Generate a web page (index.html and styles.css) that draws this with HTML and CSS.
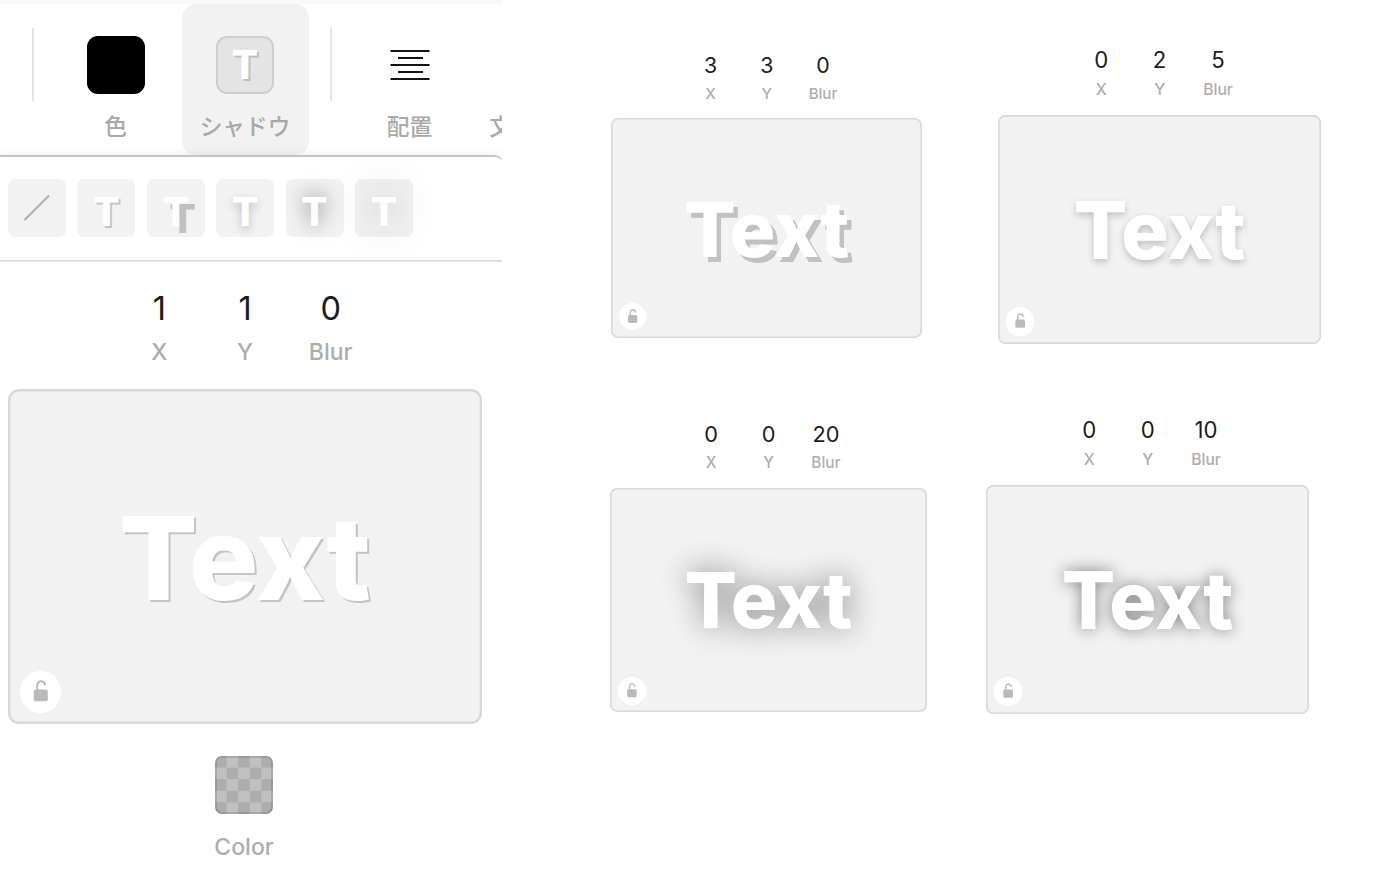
FILE: index.html
```html
<!DOCTYPE html>
<html lang="ja">
<head>
  <meta charset="UTF-8">
  <title>Text shadow</title>
  <link rel="stylesheet" href="styles.css">
</head>
<body>
  <svg class="hidden">
    <symbol id="unlock" viewBox="0 0 42 42">
      <rect x="13.9" y="18.6" width="14.2" height="12" rx="2" fill="#bababa"/>
      <path d="M17.4 19.5v-5.4a4 4 0 0 1 7.7-1.2v1" fill="none" stroke="#bababa" stroke-width="2.1" stroke-linecap="round"/>
    </symbol>
  </svg>
  <div class="page">
    <section class="editor">
      <nav class="toolbar">
        <div class="divider"></div>
        <div class="tool tool-color">
          <div class="tool-icon black"></div>
          <span class="tool-label">色</span>
        </div>
        <div class="tool active">
          <div class="tool-icon shadow-icon">T</div>
          <span class="tool-label">シャドウ</span>
        </div>
        <div class="divider divider-right"></div>
        <div class="tool tool-align">
          <svg class="align-icon" viewBox="0 0 58 58">
            <path d="M9.5 15H48.5M17 22H42M9.5 29H48.5M17 36H42M9.5 43H48.5" stroke="#111" stroke-width="2.1"/>
          </svg>
          <span class="tool-label">配置</span>
        </div>
        <div class="tool tool-next">
          <span class="tool-label">文</span>
        </div>
      </nav>
      <div class="presets">
        <div class="preset">
          <svg viewBox="0 0 58 58"><path d="M16.5 41L41 16.5" stroke="#aeaeae" stroke-width="2.2"/></svg>
        </div>
        <div class="preset"><span class="s1">T</span></div>
        <div class="preset"><span class="s2">T</span></div>
        <div class="preset"><span class="s3">T</span></div>
        <div class="preset"><span class="s4">T</span></div>
        <div class="preset"><span class="s5">T</span></div>
      </div>
      <div class="preview main">
        <div class="values">
          <div class="value"><b>1</b><i>X</i></div>
          <div class="value"><b>1</b><i>Y</i></div>
          <div class="value"><b>0</b><i>Blur</i></div>
        </div>
        <div class="card">
          <span class="sample">Text</span>
          <svg class="lock"><use href="#unlock"/></svg>
        </div>
      </div>
      <div class="color-picker">
        <div class="swatch"></div>
        <span class="color-label">Color</span>
      </div>
    </section>
    <section class="variants">
      <div class="preview hard">
        <div class="values">
          <div class="value"><b>3</b><i>X</i></div>
          <div class="value"><b>3</b><i>Y</i></div>
          <div class="value"><b>0</b><i>Blur</i></div>
        </div>
        <div class="card">
          <span class="sample">Text</span>
          <svg class="lock"><use href="#unlock"/></svg>
        </div>
      </div>
      <div class="preview soft">
        <div class="values">
          <div class="value"><b>0</b><i>X</i></div>
          <div class="value"><b>2</b><i>Y</i></div>
          <div class="value"><b>5</b><i>Blur</i></div>
        </div>
        <div class="card">
          <span class="sample">Text</span>
          <svg class="lock"><use href="#unlock"/></svg>
        </div>
      </div>
      <div class="preview wide">
        <div class="values">
          <div class="value"><b>0</b><i>X</i></div>
          <div class="value"><b>0</b><i>Y</i></div>
          <div class="value"><b>20</b><i>Blur</i></div>
        </div>
        <div class="card">
          <span class="sample">Text</span>
          <svg class="lock"><use href="#unlock"/></svg>
        </div>
      </div>
      <div class="preview glow">
        <div class="values">
          <div class="value"><b>0</b><i>X</i></div>
          <div class="value"><b>0</b><i>Y</i></div>
          <div class="value"><b>10</b><i>Blur</i></div>
        </div>
        <div class="card">
          <span class="sample">Text</span>
          <svg class="lock"><use href="#unlock"/></svg>
        </div>
      </div>
    </section>
  </div>
</body>
</html>
```

FILE: styles.css
```css
* { box-sizing: border-box; }
body {
  margin: 0;
  background: #fff;
  font-family: Inter, "Noto Sans CJK JP", sans-serif;
  overflow: hidden;
}
.hidden { display: none; }
.page {
  display: flex;
  width: 1382px;
  height: 870px;
}
.editor {
  width: 502px;
  height: 870px;
  overflow: hidden;
  flex-shrink: 0;
}

/* toolbar */
.toolbar {
  display: flex;
  height: 155px;
  border-top: 4px solid #f9f9f9;
  padding-left: 31.5px;
  background: #fff;
}
.divider {
  width: 2px;
  height: 73px;
  margin-top: 24px;
  background: #e4e4e4;
  flex-shrink: 0;
}
.divider-right { margin-left: 21px; }
.tool {
  display: flex;
  flex-direction: column;
  align-items: center;
  width: 127px;
  height: 150.5px;
  padding-top: 31.5px;
  flex-shrink: 0;
}
.tool-color {
  width: 132px;
  margin-left: 16px;
}
.tool-icon {
  width: 58px;
  height: 58px;
  border-radius: 11px;
}
.black { background: #000; }
.active {
  background: #f2f2f2;
  border-radius: 14px;
}
.shadow-icon {
  border: 2px solid #cecece;
  background: #e4e4e4;
  color: #fff;
  font-size: 39px;
  font-weight: 800;
  line-height: 54px;
  text-align: center;
  text-shadow: 2px 2px #bebebe;
}
.tool-align {
  width: 100px;
  margin-left: 28px;
}
.align-icon {
  width: 58px;
  height: 58px;
}
.tool-label {
  margin-top: 17px;
  color: #a9a9a9;
  font-size: 22.7px;
  font-weight: 500;
  line-height: 32px;
  white-space: nowrap;
}
.tool-next {
  width: 82px;
  padding-top: 89.5px;
}

/* presets */
.presets {
  position: relative;
  display: flex;
  gap: 11.4px;
  width: 504px;
  height: 106.5px;
  padding: 22px 8px 0;
  background: #fff;
  border-top: 2px solid #c3c3c3;
  border-bottom: 2px solid #d7d7d7;
  border-top-right-radius: 10px;
  box-shadow: 0 -1px 9px rgba(0,0,0,0.08);
  clip-path: inset(-12px 0 0 0);
}
.preset {
  width: 58px;
  height: 58px;
  border-radius: 7px;
  background: #f2f2f2;
  color: #fff;
  font-size: 39px;
  font-weight: 800;
  line-height: 66px;
  text-align: center;
  flex-shrink: 0;
}
.preset svg { display: block; }
.s1 { text-shadow: 2px 2px #c6c6c6; }
.s2 { text-shadow: 7px 7px #c1c1c1; }
.s3 { text-shadow: 0 4px 10px rgba(0,0,0,0.22); }
.s4 { text-shadow: 0 0 20px rgba(0,0,0,0.5); }
.s5 { text-shadow: 0 0 40px rgba(0,0,0,0.42); }

/* preview: every length is a multiple of --u */
.preview {
  --u: 1px;
  width: calc(474 * var(--u));
}
.values {
  display: flex;
  justify-content: center;
  height: calc(100 * var(--u));
}
.value {
  display: flex;
  flex-direction: column;
  align-items: center;
  width: calc(85.7 * var(--u));
}
.value b {
  color: #1c1c1c;
  font-size: calc(32.5 * var(--u));
  font-weight: 400;
  line-height: calc(40 * var(--u));
}
.value i {
  margin-top: calc(8 * var(--u));
  color: #adadad;
  font-size: calc(23 * var(--u));
  font-style: normal;
  font-weight: 450;
  line-height: calc(30 * var(--u));
}
.card {
  position: relative;
  display: flex;
  align-items: center;
  justify-content: center;
  height: calc(335 * var(--u));
  padding-top: calc(3 * var(--u));
  border-radius: calc(11 * var(--u));
  background: #f2f2f2;
  box-shadow: inset 0 0 0 calc(2.4 * var(--u)) #d9d9d9;
}
.sample {
  color: #fff;
  font-size: calc(116 * var(--u));
  font-weight: 800;
  line-height: 1;
}
.lock {
  position: absolute;
  left: calc(11.6 * var(--u));
  bottom: calc(11.3 * var(--u));
  width: calc(41.6 * var(--u));
  height: calc(41.6 * var(--u));
  border-radius: 50%;
  background: #fff;
}
.main { margin: 27.5px 0 0 8px; }
.main .sample { text-shadow: 2px 2px #c4c4c4; }

.color-picker {
  display: flex;
  flex-direction: column;
  align-items: center;
  width: 488px;
  padding-top: 31.5px;
}
.swatch {
  width: 58px;
  height: 58px;
  border-radius: 7px;
  background: repeating-conic-gradient(#c0c0c0 0 25%, #adadad 0 50%) 0 0 / 23.2px 23.2px;
  box-shadow: inset 0 0 0 2px rgba(0,0,0,0.12);
}
.color-label {
  margin-top: 18px;
  color: #adadad;
  font-size: 23px;
  font-weight: 500;
  line-height: 30px;
}

/* variants */
.variants {
  display: grid;
  grid-template-columns: 376px 336px;
  grid-template-rows: 370px 370px;
  align-items: start;
  padding: 46.9px 0 0 108px;
}
.hard {
  --u: 0.656px;
  margin: 5.5px 0 0 1.3px;
}
.hard .sample { text-shadow: 4.5px 4.5px #c1c1c1; }
.soft {
  --u: 0.682px;
  margin-left: 12px;
}
.soft .sample { text-shadow: 0 3px 7px rgba(0,0,0,0.22); }
.wide {
  --u: 0.669px;
  margin-top: 4.2px;
}
.wide .sample { text-shadow: 0 0 30px rgba(0,0,0,0.47); }
.glow { --u: 0.682px; }
.glow .sample { text-shadow: 0 0 16px rgba(0,0,0,0.48); }
```
